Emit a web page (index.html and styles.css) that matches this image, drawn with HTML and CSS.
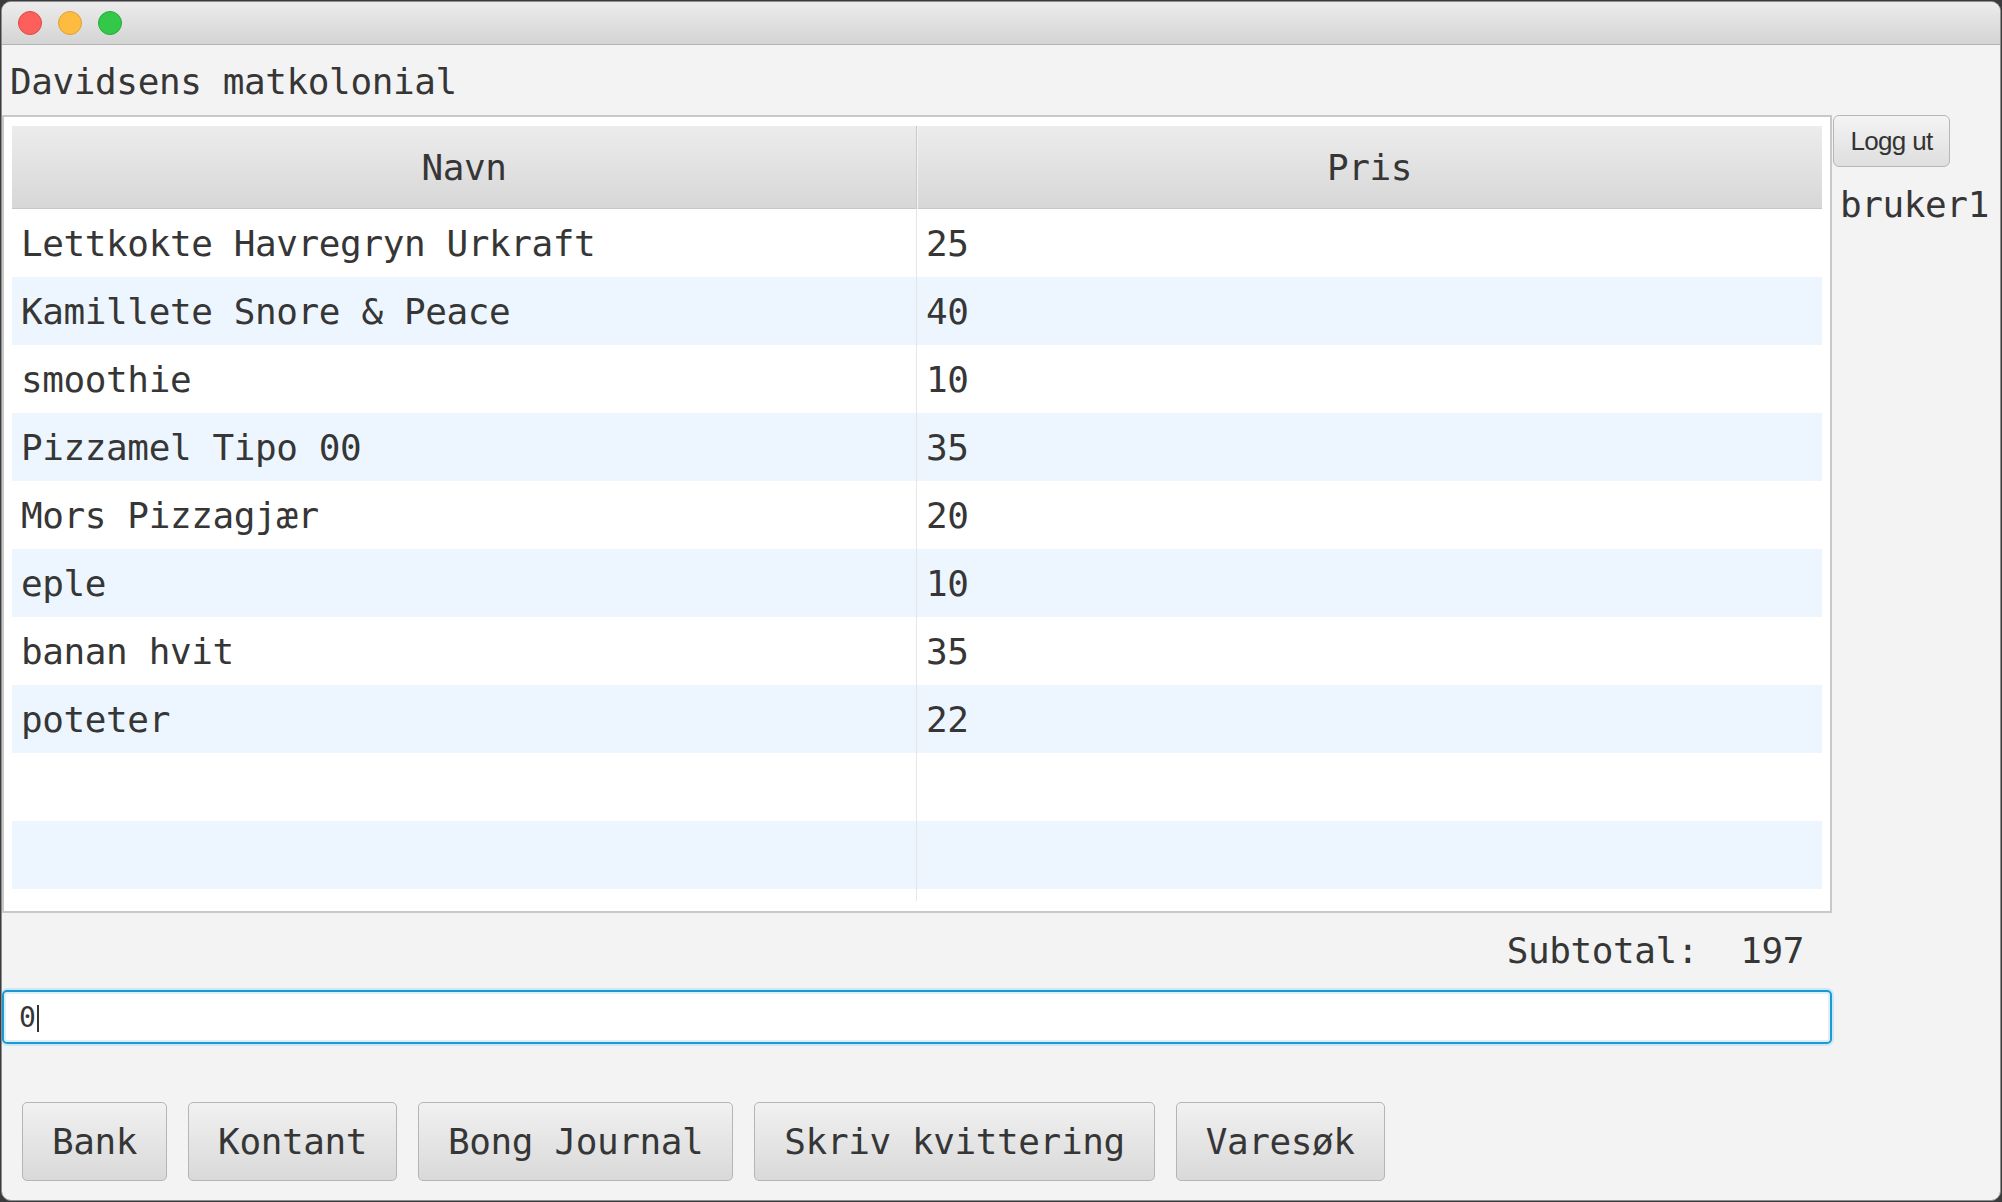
FILE: index.html
```html
<!DOCTYPE html>
<html lang="no">
<head>
<meta charset="utf-8">
<title>Davidsens matkolonial</title>
<link rel="stylesheet" href="styles.css">
</head>
<body>
<div class="window">
  <div class="titlebar">
    <span class="light red"></span>
    <span class="light yellow"></span>
    <span class="light green"></span>
  </div>
  <div class="content">
    <div class="app-title mono">Davidsens matkolonial</div>
    <div class="main">
      <div class="frame">
        <div class="table mono">
          <div class="head">
            <div class="th">Navn</div>
            <div class="th">Pris</div>
          </div>
          <div class="row"><div class="td">Lettkokte Havregryn Urkraft</div><div class="td">25</div></div>
          <div class="row alt"><div class="td">Kamillete Snore &amp; Peace</div><div class="td">40</div></div>
          <div class="row"><div class="td">smoothie</div><div class="td">10</div></div>
          <div class="row alt"><div class="td">Pizzamel Tipo 00</div><div class="td">35</div></div>
          <div class="row"><div class="td">Mors Pizzagjær</div><div class="td">20</div></div>
          <div class="row alt"><div class="td">eple</div><div class="td">10</div></div>
          <div class="row"><div class="td">banan hvit</div><div class="td">35</div></div>
          <div class="row alt"><div class="td">poteter</div><div class="td">22</div></div>
          <div class="row"><div class="td"></div><div class="td"></div></div>
          <div class="row alt"><div class="td"></div><div class="td"></div></div>
          <div class="row filler"><div class="td"></div><div class="td"></div></div>
        </div>
      </div>
      <div class="side">
        <button class="logout">Logg ut</button>
        <div class="user mono">bruker1</div>
      </div>
    </div>
    <div class="subtotal mono"><span>Subtotal:</span><span class="sum">197</span></div>
    <div class="field mono"><span class="value">0</span><span class="caret"></span></div>
    <div class="actions">
      <button class="btn mono">Bank</button>
      <button class="btn mono">Kontant</button>
      <button class="btn mono">Bong Journal</button>
      <button class="btn mono">Skriv kvittering</button>
      <button class="btn mono">Varesøk</button>
    </div>
  </div>
</div>
</body>
</html>
```
FILE: styles.css
```css
* { box-sizing: border-box; }

html, body {
  margin: 0;
  padding: 0;
}

body {
  background: #3b3b3d;
  padding: 1px;
  width: 2002px;
  height: 1202px;
  overflow: hidden;
}

.mono {
  font-family: "DejaVu Sans Mono", "Liberation Mono", monospace;
  font-size: 36px;
  letter-spacing: -0.4px;
  color: #363636;
}

.window {
  width: 2000px;
  height: 1200px;
  background: #f3f3f3;
  border: 1px solid #8e8e8e;
  border-radius: 10px;
  overflow: hidden;
  display: flex;
  flex-direction: column;
}

.titlebar {
  height: 43px;
  flex: 0 0 43px;
  border-bottom: 1px solid #b3b3b3;
  background: linear-gradient(#ececec, #d4d4d4);
  display: flex;
  align-items: center;
  gap: 16px;
  padding: 0 0 1px 16px;
}

.light {
  width: 24px;
  height: 24px;
  border-radius: 50%;
  display: block;
}
.light.red { background: #fc605c; border: 1px solid #df4744; }
.light.yellow { background: #fdbc40; border: 1px solid #de9f34; }
.light.green { background: #34c84a; border: 1px solid #27a83a; }

.content {
  display: flex;
  flex-direction: column;
}

.app-title {
  height: 70px;
  padding: 16px 0 0 8px;
  line-height: 42px;
}

.main {
  display: flex;
  height: 798px;
}

.frame {
  flex: 0 0 1830px;
  background: #ffffff;
  border: 2px solid #c8c8c8;
  padding: 9px 8px 10px 8px;
}

.table {
  display: flex;
  flex-direction: column;
}

.head {
  display: grid;
  grid-template-columns: 1fr 1fr;
  height: 83px;
  border-bottom: 1px solid #c6c6c6;
  background: linear-gradient(#ececec, #d7d7d7);
}

.th {
  text-align: center;
  line-height: 82px;
  padding-top: 1px;
}
.th:first-child {
  border-right: 1px solid #c9c9c9;
  box-shadow: 1px 0 0 #f4f4f4;
}

.row {
  display: grid;
  grid-template-columns: 1fr 1fr;
  height: 68px;
  background: #ffffff;
}
.row.alt { background: #edf6fe; }
.row.filler { height: 12px; background: transparent; }

.td {
  line-height: 68px;
  padding: 1px 0 0 9px;
  white-space: nowrap;
  overflow: hidden;
}
.td:first-child { border-right: 1px solid #e6e6e6; }

.side {
  flex: 1;
  display: flex;
  flex-direction: column;
  align-items: flex-start;
}

.logout {
  margin: 0 0 0 1px;
  width: 117px;
  height: 52px;
  border: 1px solid #b7b7b7;
  border-radius: 6px;
  background: linear-gradient(#f4f4f4, #dedede);
  font-family: "Liberation Sans", Arial, sans-serif;
  font-size: 26px;
  letter-spacing: -0.7px;
  color: #333333;
  padding: 0;
}

.user {
  margin: 17px 0 0 8px;
  line-height: 42px;
}

.subtotal {
  width: 1830px;
  height: 77px;
  padding: 17px 28px 0 0;
  line-height: 42px;
  display: flex;
  justify-content: flex-end;
  gap: 42px;
}

.field {
  width: 1830px;
  height: 54px;
  border: 2px solid #1b99d6;
  border-radius: 5px;
  background: #ffffff;
  box-shadow: 0 0 0 2px #cce8f6, inset 0 0 0 2px #dcf0fa;
  padding: 0 0 0 15px;
  display: flex;
  align-items: center;
  font-size: 28px;
  letter-spacing: 0;
}

.caret {
  display: block;
  width: 2px;
  height: 27px;
  background: #333333;
  margin: 2px 0 0 1px;
}

.actions {
  margin-top: 58px;
  padding-left: 20px;
  display: flex;
  gap: 21px;
}

.btn {
  height: 79px;
  padding: 0 29px;
  border: 1px solid #b5b5b5;
  border-radius: 5px;
  background: linear-gradient(#f1f1f1, #d9d9d9);
  line-height: 77px;
  white-space: nowrap;
}
```
